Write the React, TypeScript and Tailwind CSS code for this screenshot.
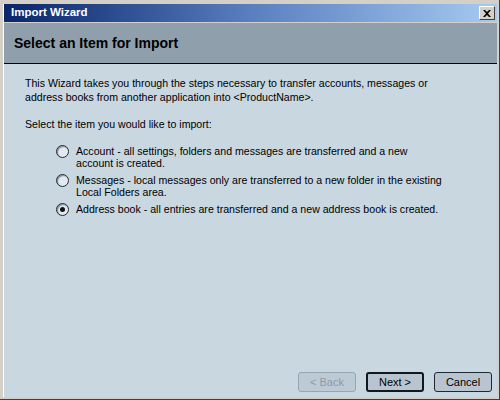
import React, { useState } from 'react';

const FONT = { fontFamily: '"Liberation Sans", Arial, sans-serif' };

const options = [
  {
    id: 'account',
    label: ['Account - all settings, folders and messages are transferred and a new', 'account is created.'],
  },
  {
    id: 'messages',
    label: ['Messages - local messages only are transferred to a new folder in the existing', 'Local Folders area.'],
  },
  {
    id: 'addressbook',
    label: ['Address book - all entries are transferred and a new address book is created.'],
  },
];

const Radio: React.FC<{ checked: boolean }> = ({ checked }) => (
  <span className="w-[13px] h-[13px] shrink-0 rounded-full border border-[#1f2a33] bg-[#e3eaef] shadow-[inset_1px_1px_1px_#7d8a94] flex items-center justify-center">
    {checked && <span className="w-[5px] h-[5px] rounded-full bg-[#111]" />}
  </span>
);

const WizardButton: React.FC<{ label: string; disabled?: boolean; isDefault?: boolean }> = ({
  label,
  disabled,
  isDefault,
}) => (
  <button
    disabled={disabled}
    className={
      'w-[58px] h-[20px] rounded-[3px] text-[11px] leading-none flex items-center justify-center ' +
      (disabled
        ? 'border border-[#98a6b4] bg-[#bccad5] text-[#8c9aa8]'
        : isDefault
        ? 'border-2 border-[#10171d] bg-[#b8c5d0] text-black'
        : 'border border-[#1f2930] bg-[#b8c5d0] text-black')
    }
  >
    {label}
  </button>
);

export default function App() {
  const [selected, setSelected] = useState('addressbook');

  return (
    <div
      className="w-[500px] h-[400px] bg-[#d4d0c8] pt-[4px] pl-[3px] pr-[2px] pb-[2px] border-r border-b border-[#404040] flex flex-col"
      style={FONT}
    >
      <div className="flex-1 flex flex-col border-l border-white min-h-0">
        {/* Title bar */}
        <div className="h-[18px] shrink-0 bg-gradient-to-r from-[#0a246a] via-[#5a7fc0] to-[#a6caf0] flex items-center justify-between pl-[7px] pr-[2px]">
          <span className="text-white font-bold text-[11.5px]">Import Wizard</span>
          <button className="w-[16px] h-[14px] bg-[#d4d0c8] border border-t-white border-l-white border-r-[#404040] border-b-[#404040] flex items-center justify-center">
            <svg width="8" height="7" viewBox="0 0 8 7">
              <path d="M0 0h2l2 2 2-2h2L5 3.5 8 7H6L4 5 2 7H0l3-3.5z" fill="#000" />
            </svg>
          </button>
        </div>

        <div className="h-px bg-[#d4d0c8] shrink-0" />

        {/* Header */}
        <div className="h-[41px] shrink-0 bg-[#8f9fac] border-b border-black flex items-center pl-[10px]">
          <span className="text-[14px] font-bold text-black">Select an Item for Import</span>
        </div>

        {/* Body */}
        <div className="flex-1 bg-[#c9d7e1] flex flex-col pl-[21px] pr-[5px] pt-[12px] pb-[5px] text-[10.6px] text-black">
          <p className="leading-[14px]">
            This Wizard takes you through the steps necessary to transfer accounts, messages or
            <br />
            address books from another application into &lt;ProductName&gt;.
          </p>
          <p className="mt-[13px] leading-[14px]">Select the item you would like to import:</p>

          <div className="mt-[14px] pl-[31px] flex flex-col gap-[5px]">
            {options.map((o) => (
              <label key={o.id} className="flex items-start gap-[7px]" onClick={() => setSelected(o.id)}>
                <Radio checked={selected === o.id} />
                <span className="leading-[12px]">
                  {o.label.map((l, i) => (
                    <span key={i} className="block">
                      {l}
                    </span>
                  ))}
                </span>
              </label>
            ))}
          </div>

          <div className="mt-auto flex justify-end gap-[10px]">
            <WizardButton label="< Back" disabled />
            <WizardButton label="Next >" isDefault />
            <WizardButton label="Cancel" />
          </div>
        </div>
      </div>
    </div>
  );
}
